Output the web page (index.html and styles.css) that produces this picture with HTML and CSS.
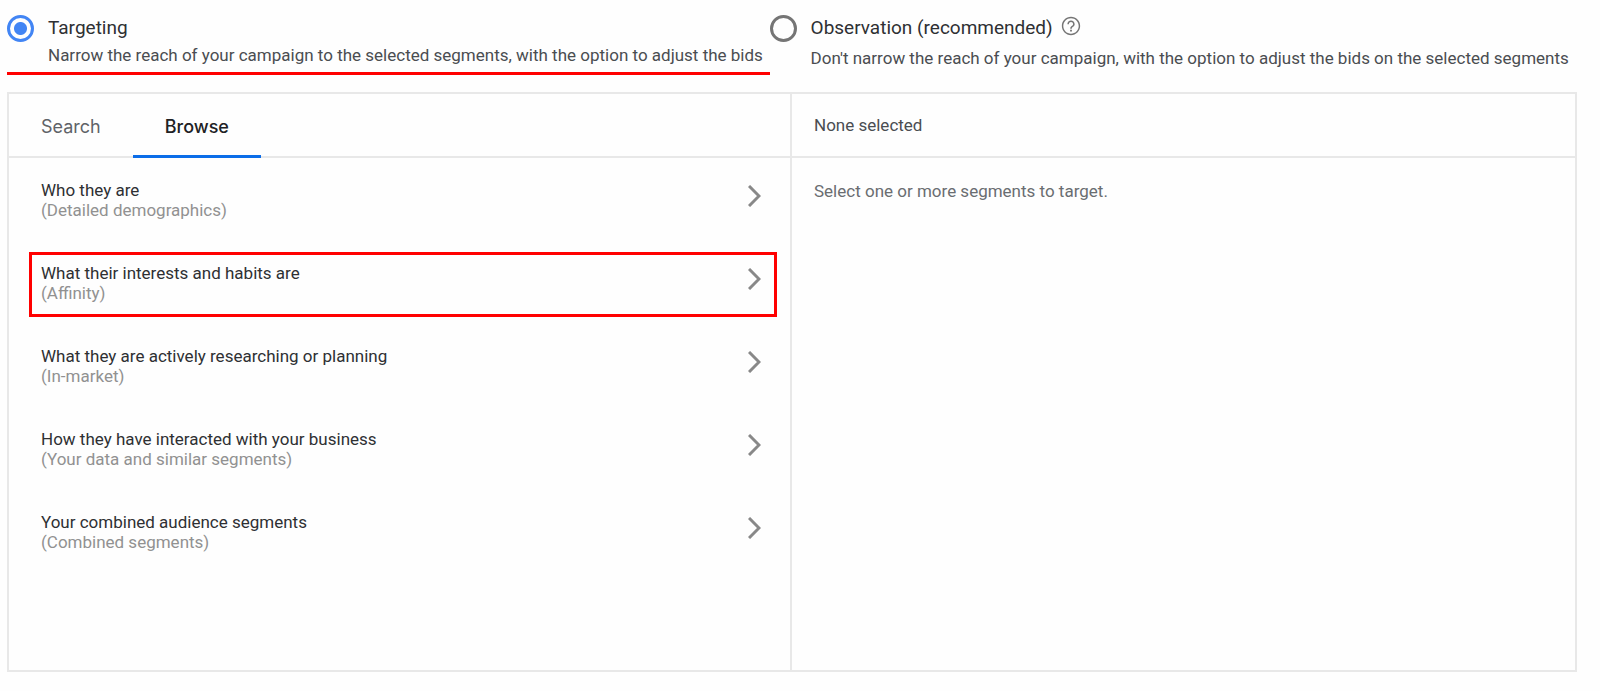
FILE: index.html
```
<!DOCTYPE html>
<html lang="en">

<head>
    <meta charset="UTF-8">
    <meta name="viewport" content="width=device-width, initial-scale=1.0">
    <title>Audience Segments</title>
    <link rel="stylesheet" href="styles.css">
</head>

<body>
    <form class="options">
        <div class="option marked">
            <input type="radio" id="targeting" name="reach" checked>
            <div>
                <label for="targeting">Targeting</label>
                <p>Narrow the reach of your campaign to the selected segments, with the option to adjust the bids</p>
            </div>
        </div>
        <div class="option">
            <input type="radio" id="observation" name="reach">
            <div>
                <div class="option-title">
                    <label for="observation">Observation (recommended)</label>
                    <button type="button" class="help" aria-label="Help">
                        <svg width="22" height="22" viewBox="0 0 24 24" fill="#757575">
                            <path d="M11 18h2v-2h-2v2zm1-16C6.48 2 2 6.48 2 12s4.48 10 10 10 10-4.48 10-10S17.52 2 12 2zm0 18.400c-4.640 0-8.400-3.760-8.400-8.400s3.760-8.400 8.400-8.400 8.400 3.760 8.400 8.400-3.760 8.400-8.400 8.400zm0-14.400c-2.210 0-4 1.790-4 4h1.700c0-1.270 1.030-2.300 2.300-2.300s2.300 1.030 2.300 2.300c0 2-3.150 1.750-3.150 5h1.700c0-2.250 3.150-2.500 3.150-5 0-2.210-1.790-4-4-4z" />
                        </svg>
                    </button>
                </div>
                <p>Don't narrow the reach of your campaign, with the option to adjust the bids on the selected segments</p>
            </div>
        </div>
    </form>

    <main class="panel">
        <section class="picker">
            <nav class="panel-head tabs">
                <button type="button" class="tab">Search</button>
                <button type="button" class="tab active">Browse</button>
            </nav>
            <div class="segments">
                <button type="button" class="segment">
                    <span>Who they are<small>(Detailed demographics)</small></span>
                    <svg class="arrow" viewBox="0 0 13 22"><path d="M1 1l10 10L1 21" /></svg>
                </button>
                <button type="button" class="segment highlight">
                    <span>What their interests and habits are<small>(Affinity)</small></span>
                    <svg class="arrow" viewBox="0 0 13 22"><path d="M1 1l10 10L1 21" /></svg>
                </button>
                <button type="button" class="segment">
                    <span>What they are actively researching or planning<small>(In-market)</small></span>
                    <svg class="arrow" viewBox="0 0 13 22"><path d="M1 1l10 10L1 21" /></svg>
                </button>
                <button type="button" class="segment">
                    <span>How they have interacted with your business<small>(Your data and similar segments)</small></span>
                    <svg class="arrow" viewBox="0 0 13 22"><path d="M1 1l10 10L1 21" /></svg>
                </button>
                <button type="button" class="segment">
                    <span>Your combined audience segments<small>(Combined segments)</small></span>
                    <svg class="arrow" viewBox="0 0 13 22"><path d="M1 1l10 10L1 21" /></svg>
                </button>
            </div>
        </section>
        <section class="selected">
            <h2 class="panel-head">None selected</h2>
            <p>Select one or more segments to target.</p>
        </section>
    </main>
</body>

</html>
```

FILE: styles.css
```
* {
    box-sizing: border-box;
}

body {
    margin: 0;
    padding: 14px 23px 19px 7px;
    background-color: #fefefe;
    color: #4a4d51;
    font-family: Roboto, sans-serif;
    font-size: 17px;
}

p,
h2 {
    margin: 0;
}

button {
    padding: 0;
    border: none;
    background: none;
    font-family: inherit;
    font-size: inherit;
    cursor: pointer;
}

.options {
    display: grid;
    grid-template-columns: 34fr 36fr;
    margin-bottom: 17px;
}

.option {
    display: flex;
    gap: 14px;
    height: 61px;
}

.option.marked {
    border-bottom: 3px solid #ff0000;
}

.option input {
    flex: none;
    appearance: none;
    width: 27px;
    height: 27px;
    margin: 1px 0;
    border: 3px solid #757575;
    border-radius: 50%;
}

.option input:checked {
    border-color: #4285f4;
    background: radial-gradient(circle, #4285f4 6px, transparent 7px);
}

.option label {
    display: block;
    color: #2e3033;
    font-size: 19px;
    line-height: 28px;
}

.option p {
    line-height: 32px;
}

.option.marked p {
    line-height: 26px;
}

.option-title {
    display: flex;
    align-items: flex-start;
    gap: 7px;
}

.help {
    display: flex;
    margin-top: 1px;
}

.panel {
    display: grid;
    grid-template-columns: 1fr 1fr;
    min-height: 580px;
    border: 2px solid #e8e8e8;
}

.panel-head {
    height: 64px;
    border-bottom: 2px solid #e8e8e8;
}

.picker {
    border-right: 2px solid #e8e8e8;
}

.tabs {
    display: flex;
}

.tab {
    height: 64px;
    padding: 4px 32px 0;
    border-bottom: 3px solid transparent;
    color: #5f6368;
    font-family: Inter, sans-serif;
    font-size: 18px;
}

.tab.active {
    border-bottom-color: #0b6de8;
    color: #202124;
    font-weight: 500;
}

.segments {
    display: grid;
    gap: 18px;
    padding: 11px 13px 11px 20px;
}

.segment {
    display: flex;
    align-items: flex-start;
    justify-content: space-between;
    height: 65px;
    padding: 8px 13px 8px 9px;
    border: 3px solid transparent;
    color: #2e3033;
    line-height: 20px;
    text-align: left;
}

.segment.highlight {
    border-color: #ff0000;
}

.segment small {
    display: block;
    color: #919191;
    font-size: 17px;
}

.arrow {
    width: 13px;
    height: 22px;
    margin-top: 5px;
    fill: none;
    stroke: #888888;
    stroke-width: 3px;
}

.selected h2 {
    padding: 0 22px;
    font-size: 17px;
    font-weight: 400;
    line-height: 62px;
}

.selected p {
    padding: 23px 22px;
    color: #6a6d71;
    line-height: 20px;
}
```
